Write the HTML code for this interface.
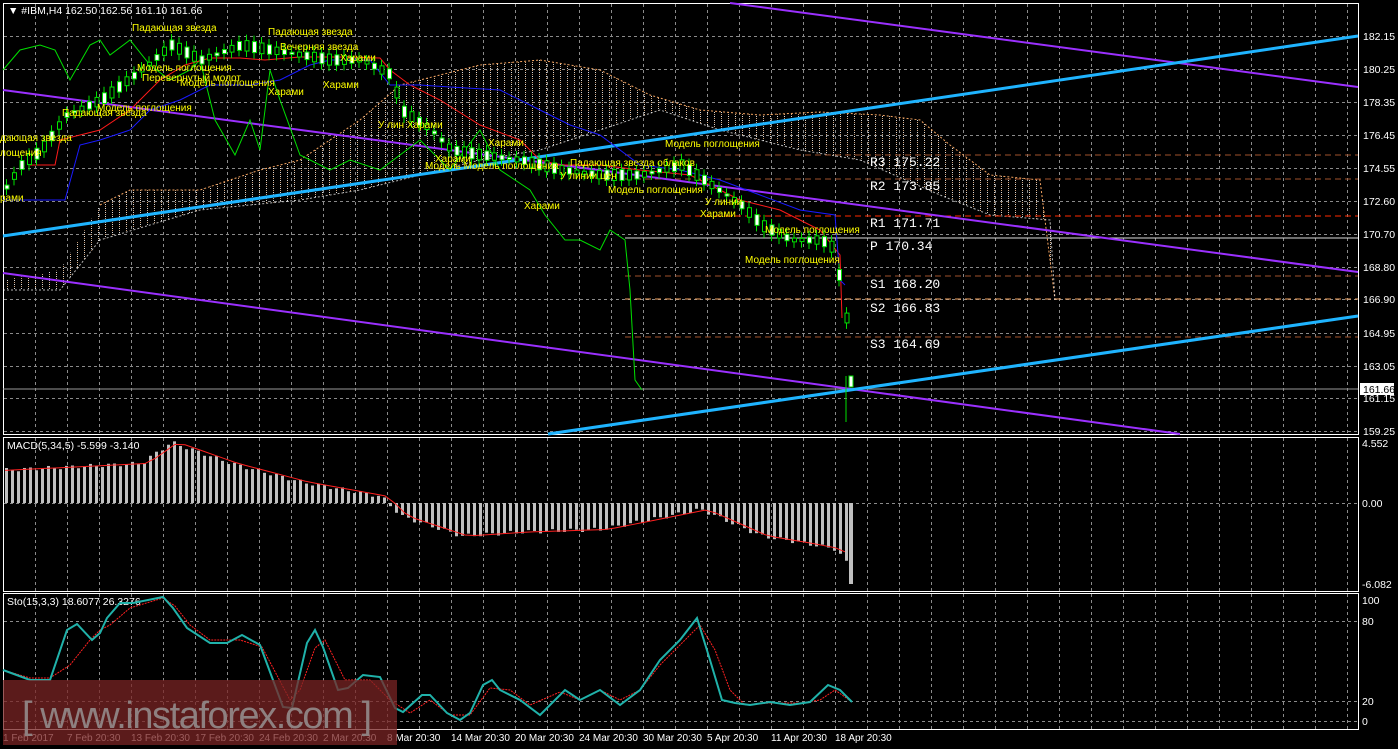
<!DOCTYPE html>
<html><head><meta charset="utf-8"><style>
html,body{margin:0;padding:0;background:#000;width:1398px;height:749px;overflow:hidden}
svg{display:block}
text{font-family:"Liberation Sans",sans-serif}
.ax{fill:#fff;font-size:10.5px}
.y{fill:#ffff00;font-size:10px}
.pv{fill:#fff;font-family:"Liberation Mono",monospace;font-size:13px}
</style></head><body>
<svg id="s" width="1398" height="749" xmlns="http://www.w3.org/2000/svg">
<defs>
<pattern id="dots" width="7" height="4" patternUnits="userSpaceOnUse"><rect x="0" y="0" width="1" height="1" fill="#fff"/><rect x="0" y="2" width="1" height="1" fill="#f4c090"/></pattern>
</defs>
<g id="grid" stroke="#8a8a8a" stroke-dasharray="3,3" stroke-width="1"></g>
<rect x="3.5" y="3.5" width="1355" height="431" fill="none" stroke="#fff"/>
<rect x="3.5" y="437.5" width="1355" height="154" fill="none" stroke="#fff"/>
<rect x="3.5" y="593.5" width="1355" height="136" fill="none" stroke="#fff"/>
<path d="M100,205 L130,190 200,190 260,170 300,160 360,120 400,85 440,75 480,65 540,60 600,70 650,95 700,110 760,115 820,112 880,115 920,120 950,145 990,175 1040,180 1050,260 1055,300 1050,220 990,215 940,195 860,160 800,150 760,140 720,130 660,110 600,130 540,150 480,160 420,175 360,190 300,200 200,210 100,240 60,290 3,290 3,280 60,270 Z" fill="url(#dots)" opacity="0.85"/>
<path d="M100,205 L130,190 200,190 260,170 300,160 360,120 400,85 440,75 480,65 540,60 600,70 650,95 700,110 760,115 820,112 880,115 920,120 950,145 990,175 1040,180 1050,260 1055,300" fill="none" stroke="#f4a460" stroke-dasharray="2,2"/>
<path d="M3,290 L60,290 100,240 200,210 300,200 360,190 420,175 480,160 540,150 600,130 660,110 720,130 760,140 800,150 860,160 940,195 990,215 1050,220 1055,300" fill="none" stroke="#fff" stroke-dasharray="2,2" opacity="0.7"/>
<g stroke-dasharray="6,4">
<line x1="625" y1="155" x2="1358" y2="155" stroke="#a0522d"/>
<line x1="625" y1="179" x2="1358" y2="179" stroke="#a0522d"/>
<line x1="625" y1="216" x2="1358" y2="216" stroke="#ff2a00"/>
<line x1="625" y1="276" x2="1358" y2="276" stroke="#a0522d"/>
<line x1="625" y1="299" x2="1358" y2="299" stroke="#f4a460"/>
<line x1="625" y1="337" x2="1358" y2="337" stroke="#a0522d"/>
</g>
<line x1="625" y1="238" x2="1358" y2="238" stroke="#ddd"/>
<line x1="3" y1="389" x2="1358" y2="389" stroke="#999"/>
<text class="pv" x="870" y="166">R3 175.22</text>
<text class="pv" x="870" y="190">R2 173.85</text>
<text class="pv" x="870" y="227">R1 171.71</text>
<text class="pv" x="870" y="250">P 170.34</text>
<text class="pv" x="870" y="288">S1 168.20</text>
<text class="pv" x="870" y="312">S2 166.83</text>
<text class="pv" x="870" y="348">S3 164.69</text>
<g stroke-width="2">
<line x1="3" y1="90" x2="1358" y2="272" stroke="#9b30ff"/>
<line x1="3" y1="273" x2="1180" y2="434" stroke="#9b30ff"/>
<line x1="730" y1="3" x2="1358" y2="87" stroke="#9b30ff"/>
</g>
<g stroke-width="3">
<line x1="3" y1="236" x2="1358" y2="36" stroke="#1fb4ff"/>
<line x1="548" y1="434" x2="1358" y2="316" stroke="#1fb4ff"/>
</g>
<polyline fill="none" stroke="#00e000" points="3,70 20,50 40,45 55,50 70,80 90,45 100,40 110,55 130,40 150,65 170,80 190,70 200,60 215,120 235,155 250,120 260,150 270,70 280,100 300,155 330,170 350,160 380,170 420,140 450,170 480,130 500,170 530,190 545,215 565,240 580,240 600,250 610,230 625,240 630,290 635,380 642,390"/>
<polyline fill="none" stroke="#ff1a1a" points="30,165 55,165 60,140 100,130 130,110 160,80 185,65 210,58 240,58 265,60 300,57 340,57 380,58 390,70 410,85 440,100 480,125 520,140 540,160 560,165 600,165 640,170 690,175 720,190 740,200 780,210 820,230 840,255 842,318"/>
<polyline fill="none" stroke="#1a1aff" points="3,200 65,200 80,145 100,140 130,130 150,110 180,100 210,85 250,85 280,80 310,65 330,60 370,60 390,85 420,85 450,87 500,90 540,110 570,125 600,135 640,165 680,170 720,180 760,195 800,210 835,215 840,280 845,285"/>
<g id="candles"></g>
<g class="y">
<text x="132" y="31">Падающая звезда</text><text x="268" y="35">Падающая звезда</text>
<text x="280" y="50">Вечерняя звезда</text><text x="340" y="61">Харами</text>
<text x="137" y="71">Модель поглощения</text><text x="142" y="81">Перевернутый молот</text>
<text x="180" y="86">Модель поглощения</text><text x="268" y="95">Харами</text><text x="323" y="88">Харами</text>
<text x="97" y="111">Модель поглощения</text><text x="62" y="116">Падающая звезда</text>
<text x="0" y="141">дающая звезда</text><text x="0" y="156">лощения</text><text x="0" y="201">рами</text>
<text x="378" y="128">У лин Харами</text><text x="435" y="162">Харами</text>
<text x="425" y="169">Модель Модель поглощения</text><text x="488" y="146">Харами</text>
<text x="570" y="166">Падающая звезда облаков</text><text x="560" y="179">У линии цен</text>
<text x="608" y="193">Модель поглощения</text><text x="665" y="147">Модель поглощения</text>
<text x="524" y="209">Харами</text><text x="705" y="205">У линии</text><text x="700" y="217">Харами</text>
<text x="765" y="233">Модель поглощения</text><text x="745" y="263">Модель поглощения</text>
</g>
<g class="ax">
<text x="1363" y="40">182.15</text><text x="1363" y="73">180.25</text><text x="1363" y="106">178.35</text>
<text x="1363" y="139">176.45</text><text x="1363" y="172">174.55</text><text x="1363" y="205">172.60</text>
<text x="1363" y="238">170.70</text><text x="1363" y="271">168.80</text><text x="1363" y="303">166.90</text>
<text x="1363" y="337">164.95</text><text x="1363" y="370">163.05</text><text x="1363" y="402">161.15</text>
<text x="1363" y="435">159.25</text>
<text x="1362" y="447">4.552</text><text x="1362" y="507">0.00</text><text x="1362" y="588">-6.082</text>
<text x="1362" y="604">100</text><text x="1362" y="625">80</text><text x="1362" y="705">20</text><text x="1362" y="725">0</text>
</g>
<rect x="1360" y="383" width="34" height="12" fill="#fff"/>
<text x="1363" y="393" style="font-size:10.5px" fill="#000">161.66</text>
<g class="ax" style="font-size:10px">
<text x="3" y="741">1 Feb 2017</text><text x="67" y="741">7 Feb 20:30</text><text x="131" y="741">13 Feb 20:30</text>
<text x="195" y="741">17 Feb 20:30</text><text x="259" y="741">24 Feb 20:30</text><text x="323" y="741">2 Mar 20:30</text>
<text x="387" y="741">8 Mar 20:30</text><text x="451" y="741">14 Mar 20:30</text><text x="515" y="741">20 Mar 20:30</text>
<text x="579" y="741">24 Mar 20:30</text><text x="643" y="741">30 Mar 20:30</text><text x="707" y="741">5 Apr 20:30</text>
<text x="771" y="741">11 Apr 20:30</text><text x="835" y="741">18 Apr 20:30</text>
</g>
<text x="8" y="14" class="ax">▼ #IBM,H4  162.50 162.56 161.10 161.66</text>
<text x="7" y="449" class="ax">MACD(5,34,5) -5.599 -3.140</text>
<text x="7" y="605" class="ax">Sto(15,3,3) 18.6077 26.3276</text>
<g id="macd"></g>
<rect x="849" y="503" width="4" height="81" fill="#c0c0c0"/>
<polyline fill="none" stroke="#ff2020" stroke-dasharray="2,1" points="3,670 30,678 50,678 70,665 90,640 100,630 110,625 130,608 163,598 175,606 190,625 210,640 240,640 262,647 290,700 300,690 315,648 325,640 345,680 370,680 390,700 410,713 430,700 450,715 470,715 490,688 510,690 530,705 560,692 580,700 600,690 620,700 640,690 660,665 685,640 700,625 715,650 730,690 745,705 770,703 800,703 820,700 835,690 852,702"/>
<polyline fill="none" stroke="#20b2aa" stroke-width="2" points="3,670 30,680 50,680 67,630 77,624 92,640 100,633 107,618 120,603 133,603 163,597 173,608 187,628 210,643 227,643 242,635 260,645 283,707 292,708 307,643 315,630 323,647 338,690 348,688 363,675 380,677 395,708 403,712 422,695 430,695 447,713 460,720 470,713 483,685 492,680 500,690 520,700 540,715 565,690 580,700 600,690 620,705 640,690 660,660 680,640 697,618 710,660 722,700 735,703 750,705 770,702 790,705 810,702 828,685 840,690 852,702"/>
<rect x="3" y="680" width="394" height="65" fill="#7a2424" opacity="0.75"/>
<text x="22" y="728" font-size="38" fill="#8e8080" textLength="350" style="font-family:'Liberation Sans',sans-serif">[ www.instaforex.com ]</text>
</svg>
<script>
var NS="http://www.w3.org/2000/svg";
function el(p,t,a){var e=document.createElementNS(NS,t);for(var k in a)e.setAttribute(k,a[k]);p.appendChild(e);return e;}
var g=document.getElementById('grid');
for(var x=35;x<1358;x+=32)[[4,434],[438,591],[594,729]].forEach(function(r){el(g,'line',{x1:x+.5,y1:r[0],x2:x+.5,y2:r[1]});});
[36,69,102,135,168,201,234,267,299,333,366,398,431,503,621,701,721].forEach(function(y){el(g,'line',{x1:4,y1:y+.5,x2:1358,y2:y+.5});});
var m=document.getElementById('macd');
var mp=[[5,2.5],[140,3],[170,4.6],[230,3],[300,1.6],[380,0.5],[400,-1],[460,-2.5],[520,-2.2],[600,-2],[700,-0.5],[760,-2.5],[800,-3],[835,-3.5],[845,-4.5],[850,-6.1]];
function iv(x,a){for(var i=1;i<a.length;i++)if(x<=a[i][0]){var p=a[i-1],q=a[i];return p[1]+(q[1]-p[1])*(x-p[0])/(q[0]-p[0]);}return a[a.length-1][1];}
for(var x=5;x<=845;x+=6){var v=iv(x,mp)+Math.sin(x*0.3)*0.15,y=503-v*13.2;el(m,'rect',{x:x,y:Math.min(y,503),width:3,height:Math.abs(503-y),fill:'#c0c0c0'});}
var sig=[];for(var x=5;x<=850;x+=10){sig.push(x+','+(503-iv(x-8,mp)*13.2));}
el(m,'polyline',{points:sig.join(' '),fill:'none',stroke:'#ff2020'});
var c=document.getElementById('candles');
var pp=[[3,190],[20,165],[40,150],[65,115],[100,100],[140,70],[170,45],[200,60],[240,45],[270,50],[300,55],[330,60],[360,60],[390,75],[400,110],[430,130],[450,150],[480,155],[520,160],[560,170],[600,175],[640,175],[680,165],[710,185],[740,205],[760,225],[790,240],[820,240],[835,250],[840,300],[845,318]];
for(var x=5;x<=845;x+=7.5){var y=iv(x,pp),d=Math.sin(x*1.3)*9,up=d>0,w=Math.abs(d)+2;
el(c,'line',{x1:x+1.5,y1:y-w/2-6,x2:x+1.5,y2:y+w/2+6,stroke:'#00e000'});
el(c,'rect',{x:x,y:y-w/2,width:4,height:w,fill:up?'#fff':'#000',stroke:'#00e000','stroke-width':1});}
el(c,'line',{x1:846,y1:376,x2:846,y2:422,stroke:'#00e000'});
el(c,'rect',{x:849,y:376,width:4,height:11,fill:'#fff',stroke:'#00e000'});
</script>
</body></html>
